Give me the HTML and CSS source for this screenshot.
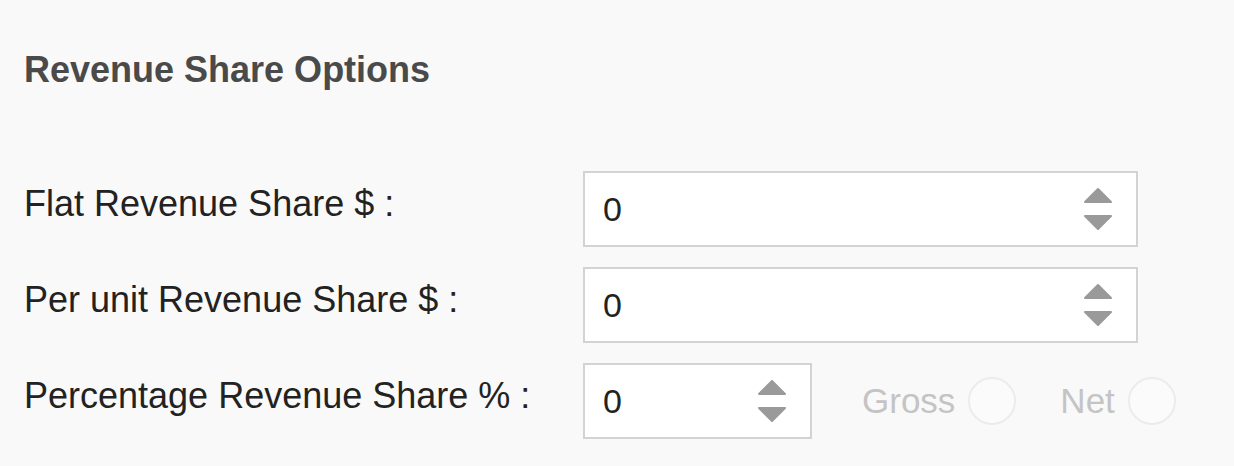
FILE: index.html
```html
<!DOCTYPE html>
<html>
<head>
    <title>Revenue Share Options</title>
    <link rel="stylesheet" href="styles.css">
</head>
<body>

<div class="panel">
    <h3 class="panel-title">Revenue Share Options</h3>

    <div class="row">
        <label class="row-label" for="flatShare">Flat Revenue Share $ :</label>
        <div class="numbox numbox-wide">
            <input type="text" id="flatShare" value="0">
            <svg class="spin" width="28" height="42" viewBox="0 0 28 42">
                <path d="M14 1 L27 14 L1 14 Z" />
                <path d="M1 28 L27 28 L14 41 Z" />
            </svg>
        </div>
    </div>

    <div class="row">
        <label class="row-label" for="unitShare">Per unit Revenue Share $ :</label>
        <div class="numbox numbox-wide">
            <input type="text" id="unitShare" value="0">
            <svg class="spin" width="28" height="42" viewBox="0 0 28 42">
                <path d="M14 1 L27 14 L1 14 Z" />
                <path d="M1 28 L27 28 L14 41 Z" />
            </svg>
        </div>
    </div>

    <div class="row">
        <label class="row-label" for="pctShare">Percentage Revenue Share % :</label>
        <div class="numbox numbox-small">
            <input type="text" id="pctShare" value="0">
            <svg class="spin" width="28" height="42" viewBox="0 0 28 42">
                <path d="M14 1 L27 14 L1 14 Z" />
                <path d="M1 28 L27 28 L14 41 Z" />
            </svg>
        </div>
        <div class="choices">
            <label class="choice">Gross <input type="radio" name="pctType" disabled></label>
            <label class="choice">Net <input type="radio" name="pctType" disabled></label>
        </div>
    </div>
</div>

</body>
</html>
```

FILE: styles.css
```css
body {
    margin: 0;
    background-color: #f9f9f9;
    font-family: "Liberation Sans", Arial, sans-serif;
}

.panel {
    padding: 50px 0 0 24px;
}

.panel-title {
    margin: 0 0 81px 0;
    font-size: 36px;
    line-height: 40px;
    font-weight: bold;
    color: #4a4a4a;
}

.row {
    display: flex;
    align-items: center;
    height: 76px;
    margin-bottom: 20px;
}

.row-label {
    width: 559px;
    font-size: 36px;
    line-height: 40px;
    color: #222;
    padding-bottom: 10px;
}

.numbox {
    box-sizing: border-box;
    display: flex;
    align-items: center;
    height: 76px;
    background-color: #fff;
    border: 2px solid #d3d3d3;
    padding: 0 24px 0 18px;
}

.numbox-wide {
    width: 555px;
}

.numbox-small {
    width: 229px;
}

.numbox input {
    flex: 1;
    min-width: 0;
    border: none;
    outline: none;
    background: transparent;
    padding: 0;
    font-family: "Liberation Sans", Arial, sans-serif;
    font-size: 34px;
    color: #222;
}

.spin {
    fill: #9a9a9a;
    stroke: #9a9a9a;
    stroke-width: 2;
    stroke-linejoin: round;
}

.choices {
    display: flex;
    align-items: center;
    margin-left: 50px;
    gap: 44px;
}

.choice {
    display: flex;
    align-items: center;
    gap: 13px;
    font-size: 35px;
    color: #c4c4c4;
}

.choice input {
    -webkit-appearance: none;
    appearance: none;
    margin: 0;
    width: 48px;
    height: 48px;
    border-radius: 50%;
    border: 2px solid #ececec;
    background-color: #fbfbfb;
}
```
